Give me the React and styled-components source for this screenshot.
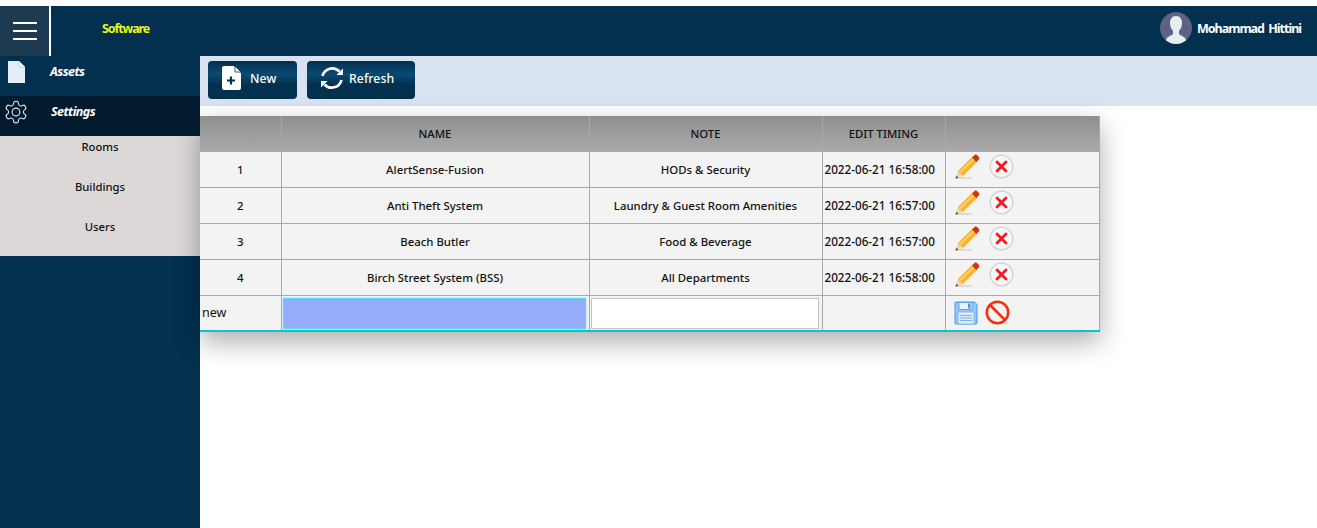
import React from "react";
import styled, { createGlobalStyle } from "styled-components";

const Global = createGlobalStyle`
  html, body { margin: 0; padding: 0; background: #fff; }
  body { font-family: "Noto Sans", "Open Sans", sans-serif; color: #000; }
  * { box-sizing: border-box; }
`;
const Page = styled.div`
  padding-top: 6px; width: 1317px; height: 528px; overflow: hidden;
  display: grid; grid-template-columns: 200px 1fr; grid-template-rows: 50px 472px;
`;
const Header = styled.header`
  grid-column: 1 / 3; background: #03304f; display: flex; align-items: stretch;
`;
const Burger = styled.div`
  width: 51px; background: #1d3a50; border-right: 2px solid #fff;
  display: flex; flex-direction: column; justify-content: center; align-items: flex-start; gap: 6px; padding-left: 13px;
  & > i { display: block; width: 24px; height: 2px; background: #fff; }
`;
const Brand = styled.div`
  margin-left: 51px; align-self: center; margin-top: -5px; font-size: 12.5px; font-weight: 700; letter-spacing: -1.1px; color: #ecf51a;
`;
const User = styled.div`
  margin-left: auto; margin-right: 16px; display: flex; align-items: center; gap: 5px; padding-bottom: 6px;
  color: #fff; font-size: 12.5px; font-weight: 700; letter-spacing: -1px; word-spacing: 2px;
`;
const Side = styled.aside`background: #03304f;`;
const MenuRow = styled.div`
  height: 40px; display: flex; align-items: center; position: relative; padding-left: ${p => p.$pad}px; padding-bottom: 10px;
  background: ${p => p.$active ? "#021a2d" : "transparent"};
  color: #fff; font-size: 12.5px; font-weight: 700; font-style: italic; letter-spacing: -0.55px;
  & > svg { position: absolute; left: ${p => p.$iconLeft}px; top: ${p => p.$iconTop}px; }
`;
const Sub = styled.div`background: #dcd8d8; height: 120px;`;
const SubItem = styled.div`
  height: 40px; text-align: center; padding-top: 2px; font-size: 11.3px; font-weight: 500; line-height: 17px; color: #111;
`;
const Main = styled.main`display: flex; flex-direction: column;`;
const Toolbar = styled.div`
  height: 50px; background: #d9e2f0; display: flex; align-items: center; gap: 10px; padding: 0 8px 2px;
`;
const Btn = styled.button`
  height: 38px; width: ${p => p.$w}px; border: 0; border-radius: 4px; padding: 0 0 4px ${p => p.$pad}px;
  display: flex; align-items: center; gap: ${p => p.$gap}px;
  background: linear-gradient(#02304f 0%, #0b4a72 35%, #02304f 62%, #02304f 100%);
  color: #fff; font: 500 12.2px "Noto Sans", sans-serif; letter-spacing: .1px;
`;
const Table = styled.table`
  margin-top: 10px; width: 899px; table-layout: fixed; border-collapse: collapse; font-size: 11.4px; font-weight: 500;
  box-shadow: 0 10px 25px rgba(0,0,0,.32);
`;
const Th = styled.th`
  height: 35px; padding: 0; font-weight: 500; color: #111; font-size: 11.3px; border: 1px solid #a8a8a8; border-top: 0;
  background: linear-gradient(#8f8f8f, #a9a9a9);
  &:first-child { border-left: 0; }
`;
const Td = styled.td`
  height: 36px; padding: 0; background: #f3f3f3; text-align: center; border: 1px solid #a8a8a8; color: #111; white-space: nowrap;
  &:first-child { border-left: 0; }
`;
const DateCell = styled(Td)`text-align: left; padding-left: 2px; font-size: 11.7px;`;
const InputCell = styled(Td)`border-bottom: 2px solid #0cc4d0;`;
const NewCell = styled(InputCell)`text-align: left; padding: 0 0 0 2px; font-size: 12.5px; font-weight: 400;`;
const Input = styled.div`
  height: 31px; margin-top: 1px; margin-left: 1px; margin-right: ${p => p.$mr}px;
  background: ${p => p.$focus ? "#96acfa" : "#fff"};
  border: 1px solid ${p => p.$focus ? "#52dcf5" : "#c4c4c4"};
  box-shadow: ${p => p.$focus ? "0 0 2px #7ce8f7" : "none"};
`;
const Actions = styled.div`
  display: flex; align-items: center; gap: ${p => p.$gap}px; padding: 0 0 ${p => p.$bottom}px 8px;
`;

const Page2 = () => (
  <svg width="19" height="24" viewBox="0 0 19 24"><path d="M1 1h11l6 6v16H1z" fill="#e6eff7" /><path d="M12 1l6 6h-6z" fill="#fff" stroke="#9fb6c8" strokeWidth=".5" /></svg>
);
const Gear = () => (
  <svg width="26" height="26" viewBox="0 0 24 24" fill="none" stroke="#dfe5ea" strokeWidth="1" strokeLinecap="round" strokeLinejoin="round"><path d="M12.22 2h-.44a2 2 0 0 0-2 2v.18a2 2 0 0 1-1 1.73l-.43.25a2 2 0 0 1-2 0l-.15-.08a2 2 0 0 0-2.73.73l-.22.38a2 2 0 0 0 .73 2.73l.15.1a2 2 0 0 1 1 1.72v.51a2 2 0 0 1-1 1.74l-.15.09a2 2 0 0 0-.73 2.73l.22.38a2 2 0 0 0 2.73.73l.15-.08a2 2 0 0 1 2 0l.43.25a2 2 0 0 1 1 1.73V20a2 2 0 0 0 2 2h.44a2 2 0 0 0 2-2v-.18a2 2 0 0 1 1-1.73l.43-.25a2 2 0 0 1 2 0l.15.08a2 2 0 0 0 2.73-.73l.22-.39a2 2 0 0 0-.73-2.73l-.15-.08a2 2 0 0 1-1-1.74v-.5a2 2 0 0 1 1-1.74l.15-.09a2 2 0 0 0 .73-2.73l-.22-.38a2 2 0 0 0-2.73-.73l-.15.08a2 2 0 0 1-2 0l-.43-.25a2 2 0 0 1-1-1.73V4a2 2 0 0 0-2-2z" /><circle cx="12" cy="12" r="3.6" /></svg>
);
const Avatar = () => (
  <svg width="32" height="32" viewBox="0 0 32 32"><circle cx="16" cy="16" r="16" fill="#5d6483" /><clipPath id="av"><circle cx="16" cy="16" r="16" /></clipPath><g clipPath="url(#av)" fill="#e8edf1"><path d="M16 4c-4 0-6 2.800-6 7 0 3.500 1.500 6.500 3 8v3c-2 2-6 2.500-7 6v4h20v-4c-1-3.500-5-4-7-6v-3c1.500-1.500 3-4.500 3-8 0-4.200-2-7-6-7z" /></g></svg>
);
const DocPlus = () => (
  <svg width="19" height="24" viewBox="0 0 19 24"><path d="M2 0h10l7 7v15a2 2 0 0 1-2 2H2a2 2 0 0 1-2-2V2a2 2 0 0 1 2-2z" fill="#fff" /><path d="M13 0l6 6h-6z" fill="#fff" stroke="#02304f" strokeWidth=".8" /><path d="M9 10.500v8M5 14.500h8" stroke="#02304f" strokeWidth="2.200" /></svg>
);
const RefreshIcon = () => (
  <svg width="24" height="24" viewBox="0 0 24 24" fill="none"><path d="M2.500 10A10 10 0 0 1 19.500 5.500" stroke="#fff" strokeWidth="2.700" /><path d="M21.500 14A10 10 0 0 1 4.500 18.500" stroke="#fff" strokeWidth="2.700" /><path d="M23 2.500v6.500h-6.500zM1 21.500v-6.500h6.500z" fill="#fff" /></svg>
);
const Pencil = () => (
  <svg width="26" height="26" viewBox="0 0 26 26"><path d="M1 24h17" stroke="#b9b6ac" strokeWidth=".8" /><path d="M4.500 16.500L18.500 2.500l5 5-14 14-6.500 2.500z" fill="#fbb42a" /><path d="M6 18.500L20 4.500" stroke="#ffd98a" strokeWidth="1.500" /><path d="M18 3.500l2.500-2.500c1-.8 2-.5 3.500 1s1.500 2.500.8 3.500L22.300 8z" fill="#d0340f" /><path d="M3.500 17l5.500 5-7 2.500z" fill="#f3d7a5" /><path d="M1.600 24.500l.7-2.800 2 2z" fill="#444" /></svg>
);
const DeleteIcon = () => (
  <svg width="25" height="25" viewBox="0 0 25 25"><circle cx="12.500" cy="12.500" r="11.300" fill="#f6f6f6" stroke="#d2d2d2" strokeWidth="1.300" /><path d="M8 8l9 9M17 8l-9 9" stroke="#ee1b24" strokeWidth="2.800" strokeLinecap="round" /></svg>
);
const Save = () => (
  <svg width="24" height="24" viewBox="0 0 24 24"><path d="M1.500 1h19L23 3.500V22a1 1 0 0 1-1 1H2a1 1 0 0 1-1-1V1.500z" fill="#95c6f7" stroke="#4b97e3" strokeWidth="1" /><rect x="5" y="1.500" width="13" height="7" fill="#eaf3fc" stroke="#4b97e3" strokeWidth=".8" /><rect x="14" y="2.500" width="2.500" height="5" fill="#4b97e3" /><rect x="4" y="11" width="16" height="12" fill="#dcecfb" stroke="#6caeec" strokeWidth=".7" /><path d="M6 14.500h12M6 17h12M6 19.500h12" stroke="#78b3ea" strokeWidth="1" /></svg>
);
const Forbidden = () => (
  <svg width="25" height="25" viewBox="0 0 25 25" fill="none"><circle cx="12.500" cy="12.500" r="10.700" stroke="#f4300e" strokeWidth="2.600" /><path d="M5 5l15 15" stroke="#f4300e" strokeWidth="2.600" /></svg>
);

const rows = [
  ["1", "AlertSense-Fusion", "HODs & Security", "2022-06-21 16:58:00"],
  ["2", "Anti Theft System", "Laundry & Guest Room Amenities", "2022-06-21 16:57:00"],
  ["3", "Beach Butler", "Food & Beverage", "2022-06-21 16:57:00"],
  ["4", "Birch Street System (BSS)", "All Departments", "2022-06-21 16:58:00"],
];

export default function App() {
  return (
    <>
      <Global />
      <Page>
        <Header>
          <Burger><i /><i /><i /></Burger>
          <Brand>Software</Brand>
          <User><Avatar />Mohammad Hittini</User>
        </Header>
        <Side>
          <MenuRow $pad={50} $iconLeft={7} $iconTop={4}><Page2 />Assets</MenuRow>
          <MenuRow $pad={51} $iconLeft={3} $iconTop={3} $active><Gear />Settings</MenuRow>
          <Sub>
            <SubItem>Rooms</SubItem>
            <SubItem>Buildings</SubItem>
            <SubItem>Users</SubItem>
          </Sub>
        </Side>
        <Main>
          <Toolbar>
            <Btn $w={89} $pad={14} $gap={9}><DocPlus />New</Btn>
            <Btn $w={108} $pad={13} $gap={5}><RefreshIcon />Refresh</Btn>
          </Toolbar>
          <Table>
            <colgroup><col width="81" /><col width="308" /><col width="233" /><col width="123" /><col width="154" /></colgroup>
            <thead><tr><Th /><Th>NAME</Th><Th>NOTE</Th><Th>EDIT TIMING</Th><Th /></tr></thead>
            <tbody>
              {rows.map(r => (
                <tr key={r[0]}>
                  <Td>{r[0]}</Td>
                  <Td>{r[1]}</Td>
                  <Td>{r[2]}</Td>
                  <DateCell>{r[3]}</DateCell>
                  <Td>
                    <Actions $gap={9} $bottom={5}><Pencil /><DeleteIcon /></Actions>
                  </Td>
                </tr>
              ))}
              <tr>
                <NewCell>new</NewCell>
                <InputCell><Input $focus $mr={3} /></InputCell>
                <InputCell><Input $mr={3} /></InputCell>
                <InputCell />
                <InputCell><Actions $gap={7} $bottom={0}><Save /><Forbidden /></Actions></InputCell>
              </tr>
            </tbody>
          </Table>
        </Main>
      </Page>
    </>
  );
}
